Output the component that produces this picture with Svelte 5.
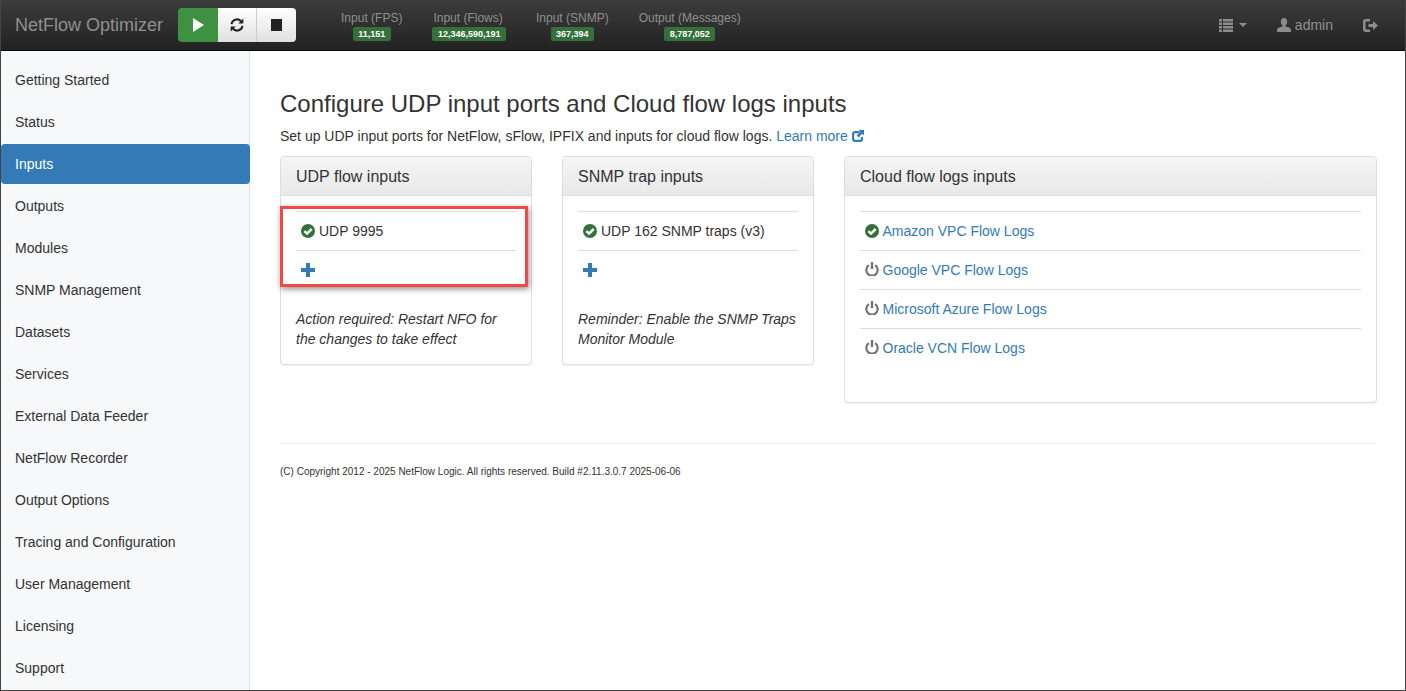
<script>
  const stats = [
    { label: 'Input (FPS)', value: '11,151' },
    { label: 'Input (Flows)', value: '12,346,590,191' },
    { label: 'Input (SNMP)', value: '367,394' },
    { label: 'Output (Messages)', value: '8,787,052' }
  ];
  const menu = ['Getting Started', 'Status', 'Inputs', 'Outputs', 'Modules', 'SNMP Management', 'Datasets', 'Services', 'External Data Feeder', 'NetFlow Recorder', 'Output Options', 'Tracing and Configuration', 'User Management', 'Licensing', 'Support'];
  const clouds = [
    { name: 'Amazon VPC Flow Logs', on: true },
    { name: 'Google VPC Flow Logs', on: false },
    { name: 'Microsoft Azure Flow Logs', on: false },
    { name: 'Oracle VCN Flow Logs', on: false }
  ];
</script>

{#snippet ok()}
  <svg class="state" viewBox="0 0 14 14" width="14" height="14"><circle cx="7" cy="7" r="7" fill="#35703a"/><path d="M3.4 7.2 6 9.6l4.700-4.600" fill="none" stroke="#fff" stroke-width="2.500"/></svg>
{/snippet}
{#snippet off()}
  <svg class="state off" viewBox="0 0 14 14" width="14" height="14"><path d="M3.800 3.200a5.700 5.700 0 1 0 6.400 0" fill="none" stroke="#747474" stroke-width="2.200"/><path d="M7 0v7" stroke="#747474" stroke-width="2.400"/></svg>
{/snippet}
{#snippet plus()}
  <svg class="plus" viewBox="0 0 14 14" width="14" height="14"><path d="M5 0h4v5h5v4H9v5H5V9H0V5h5z" fill="#337ab7"/></svg>
{/snippet}

<div class="frame">
  <header class="navbar">
    <span class="brand">NetFlow Optimizer</span>
    <div class="btn-group">
      <button class="btn play" aria-label="Start">
        <svg viewBox="0 0 11 14" width="11" height="14"><path d="M0 0 11 7 0 14z" fill="#fff"/></svg>
      </button>
      <button class="btn" aria-label="Restart">
        <svg viewBox="0 0 14 14" width="14" height="14"><path d="M1.500 6.200A5.500 5.500 0 0 1 11 3.200" fill="none" stroke="#222" stroke-width="2"/><path d="M13.300 0.600v5h-5z" fill="#222"/><path d="M12.500 7.800A5.500 5.500 0 0 1 3 10.800" fill="none" stroke="#222" stroke-width="2"/><path d="M0.700 13.400v-5h5z" fill="#222"/></svg>
      </button>
      <button class="btn" aria-label="Stop">
        <svg viewBox="0 0 11 12" width="11" height="12"><rect width="11" height="12" fill="#222"/></svg>
      </button>
    </div>
    <div class="stats">
      {#each stats as s}
        <div class="stat">
          <span class="stat-label">{s.label}</span>
          <span class="badge">{s.value}</span>
        </div>
      {/each}
    </div>
    <div class="nav-right">
      <span class="nav-item list">
        <svg viewBox="0 0 14 13" width="14" height="13"><path d="M0 0h3v2.600H0zM4 0h10v2.600H4zM0 3.500h3v2.600H0zM4 3.500h10v2.600H4zM0 7h3v2.600H0zM4 7h10v2.600H4zM0 10.400h3V13H0zM4 10.400h10V13H4z" fill="#8c8c8c"/></svg>
        <i class="caret"></i>
      </span>
      <span class="nav-item user">
        <svg viewBox="0 0 14 14" width="14" height="14"><path d="M7 0c2 0 3.200 1.500 3.200 3.600 0 1.500-.7 3-1.600 3.800v1.200c2.400.6 5.400 1.600 5.400 3V14H0v-2.400c0-1.400 3-2.400 5.400-3V7.400c-.9-.8-1.600-2.300-1.600-3.800C3.800 1.500 5 0 7 0z" fill="#8c8c8c"/></svg>
        admin
      </span>
      <span class="nav-item logout">
        <svg viewBox="0 0 15 13" width="15" height="13"><path d="M7 0v2.500H3.500a1 1 0 0 0-1 1v6a1 1 0 0 0 1 1H7V13H3a3 3 0 0 1-3-3V3a3 3 0 0 1 3-3z" fill="#8c8c8c"/><path d="M5.500 5h4.500V2l5 4.500-5 4.500V8H5.500z" fill="#8c8c8c"/></svg>
      </span>
    </div>
  </header>

  <div class="body">
    <nav class="sidebar">
      {#each menu as m}
        <span class="item" class:active={m === 'Inputs'}>{m}</span>
      {/each}
    </nav>
    <main class="main">
      <h1>Configure UDP input ports and Cloud flow logs inputs</h1>
      <p class="sub">Set up UDP input ports for NetFlow, sFlow, IPFIX and inputs for cloud flow logs. <a href="#more">Learn more
        <svg viewBox="0 0 13 13" width="12" height="12"><path d="M8 2.300H3.300A2 2 0 0 0 1.200 4.300v5.500a2 2 0 0 0 2.100 2h5.500a2 2 0 0 0 2-2V7.500" fill="none" stroke="#337ab7" stroke-width="2.400"/><path d="M7 0h6v6l-2-2-4 4-2-2 4-4z" fill="#337ab7"/></svg></a></p>

      <div class="panels">
        <section class="panel small">
          <h2>UDP flow inputs</h2>
          <div class="panel-body">
            <ul>
              <li>{@render ok()}UDP 9995</li>
              <li>{@render plus()}</li>
            </ul>
            <p class="note">Action required: Restart NFO for the changes to take effect</p>
          </div>
        </section>
        <section class="panel small">
          <h2>SNMP trap inputs</h2>
          <div class="panel-body">
            <ul>
              <li>{@render ok()}UDP 162 SNMP traps (v3)</li>
              <li>{@render plus()}</li>
            </ul>
            <p class="note">Reminder: Enable the SNMP Traps Monitor Module</p>
          </div>
        </section>
        <section class="panel wide">
          <h2>Cloud flow logs inputs</h2>
          <div class="panel-body">
            <ul>
              {#each clouds as c}
                <li>{#if c.on}{@render ok()}{:else}{@render off()}{/if}<a class="cloud" href="#cloud">{c.name}</a></li>
              {/each}
            </ul>
          </div>
        </section>
        <div class="callout"></div>
      </div>

      <footer>(C) Copyright 2012 - 2025 NetFlow Logic. All rights reserved. Build #2.11.3.0.7 2025-06-06</footer>
    </main>
  </div>
</div>

<style>
  :global(body) { margin: 0; background: #fff; }
  .frame {
    width: 1406px; height: 691px; box-sizing: border-box;
    border: 1px solid #444; border-top: 0;
    display: flex; flex-direction: column; overflow: hidden;
    font-family: "Liberation Sans", Arial, sans-serif; font-size: 14px; line-height: 20px; color: #333;
  }
  .navbar {
    height: 51px; box-sizing: border-box; flex: none;
    margin: 0 -1px; padding: 0 15px;
    display: flex; align-items: flex-start;
    background: linear-gradient(to bottom, #3c3c3c, #222);
    border-bottom: 1px solid #080808;
  }
  .brand { font-size: 18px; line-height: 50px; color: #8f8f8f; margin-right: 15px; white-space: nowrap; }
  .btn-group { display: flex; margin-top: 8px; border-radius: 4px; overflow: hidden; height: 34px; }
  .btn {
    width: 39px; height: 34px; padding: 0; border: 0; border-right: 1px solid #ccc;
    background: linear-gradient(to bottom, #fff, #e0e0e0);
    display: flex; align-items: center; justify-content: center;
  }
  .btn:last-child { border-right: 0; }
  .play { width: 40px; background: #3d9140; border-right: 0; }
  .stats { display: flex; gap: 30px; margin-left: 45px; margin-top: 10px; }
  .stat { display: flex; flex-direction: column; align-items: center; }
  .stat:nth-child(2) { align-items: flex-start; }
  .stat:nth-child(2) .stat-label { margin-left: 1px; }
  .stat-label { font-size: 12px; line-height: 16px; color: #8f8f8f; white-space: nowrap; }
  .badge {
    margin-top: 1px; height: 14px; line-height: 14px; padding: 0 5.5px; border-radius: 2px;
    background: #35703a; color: #fff; font-size: 9px; font-weight: 700; white-space: nowrap;
  }
  .nav-right { margin-left: auto; display: flex; align-items: center; height: 50px; color: #8f8f8f; padding-right: 13px; }
  .nav-item { display: flex; align-items: center; }
  .list { gap: 6px; margin-right: 30px; }
  .caret { width: 0; height: 0; border-left: 4px solid transparent; border-right: 4px solid transparent; border-top: 4px solid #8c8c8c; }
  .user { gap: 4px; margin-right: 30px; }
  .body { flex: 1; display: flex; min-height: 0; }
  .sidebar {
    width: 248px; flex: none;
    background: #f7f8fa; border-right: 1px solid #ddd; padding-top: 9px;
    display: flex; flex-direction: column; gap: 2px;
  }
  .item { height: 40px; flex: none; box-sizing: border-box; padding: 10px 14px; border-radius: 4px; color: #333; }
  .item.active { background: #337ab7; color: #fff; margin-right: -1px; }
  .main { flex: 1; min-width: 0; padding: 0 28px 0 30px; }
  h1 { margin: 40px 0 9px; font-size: 24px; line-height: 26px; font-weight: 500; color: #333; }
  .sub { margin: 0 0 10px; }
  a { color: #337ab7; text-decoration: none; }
  .sub svg { vertical-align: -1px; }
  .panels { position: relative; display: flex; gap: 30px; align-items: flex-start; }
  .panel {
    box-sizing: border-box; background: #fff; border: 1px solid #ddd; border-radius: 4px;
    box-shadow: 0 1px 1px rgba(0,0,0,.05); overflow: hidden;
  }
  .small { width: 252px; flex: none; }
  .wide { width: 533px; flex: none; }
  h2 {
    margin: 0; height: 39px; box-sizing: border-box; padding: 10px 15px;
    font-size: 16px; line-height: 19px; font-weight: 500; color: #333;
    background: linear-gradient(to bottom, #f5f5f5, #e8e8e8); border-bottom: 1px solid #ddd;
  }
  .panel-body { padding: 15px; }
  ul { list-style: none; margin: 0 0 20px; padding: 0; }
  li {
    height: 39px; box-sizing: border-box; border-top: 1px solid #ddd;
    display: flex; align-items: center; padding: 0 0 1px 5px; white-space: nowrap;
  }
  .state { margin-right: 4px; flex: none; }
  .off { margin-top: -1px; }
  .cloud { margin-left: -0.5px; }
  .plus { flex: none; }
  .note { margin: 0; font-style: italic; }
  .callout {
    position: absolute; left: 0; top: 50px; width: 248px; height: 81px; box-sizing: border-box;
    border: 3px solid #f34848; box-shadow: 1px 2px 6px rgba(0,0,0,.45); pointer-events: none;
  }
  footer {
    margin-top: 40px; padding-top: 20px; border-top: 1px solid #eee;
    font-size: 10px; line-height: 16px; color: #333;
  }
</style>
